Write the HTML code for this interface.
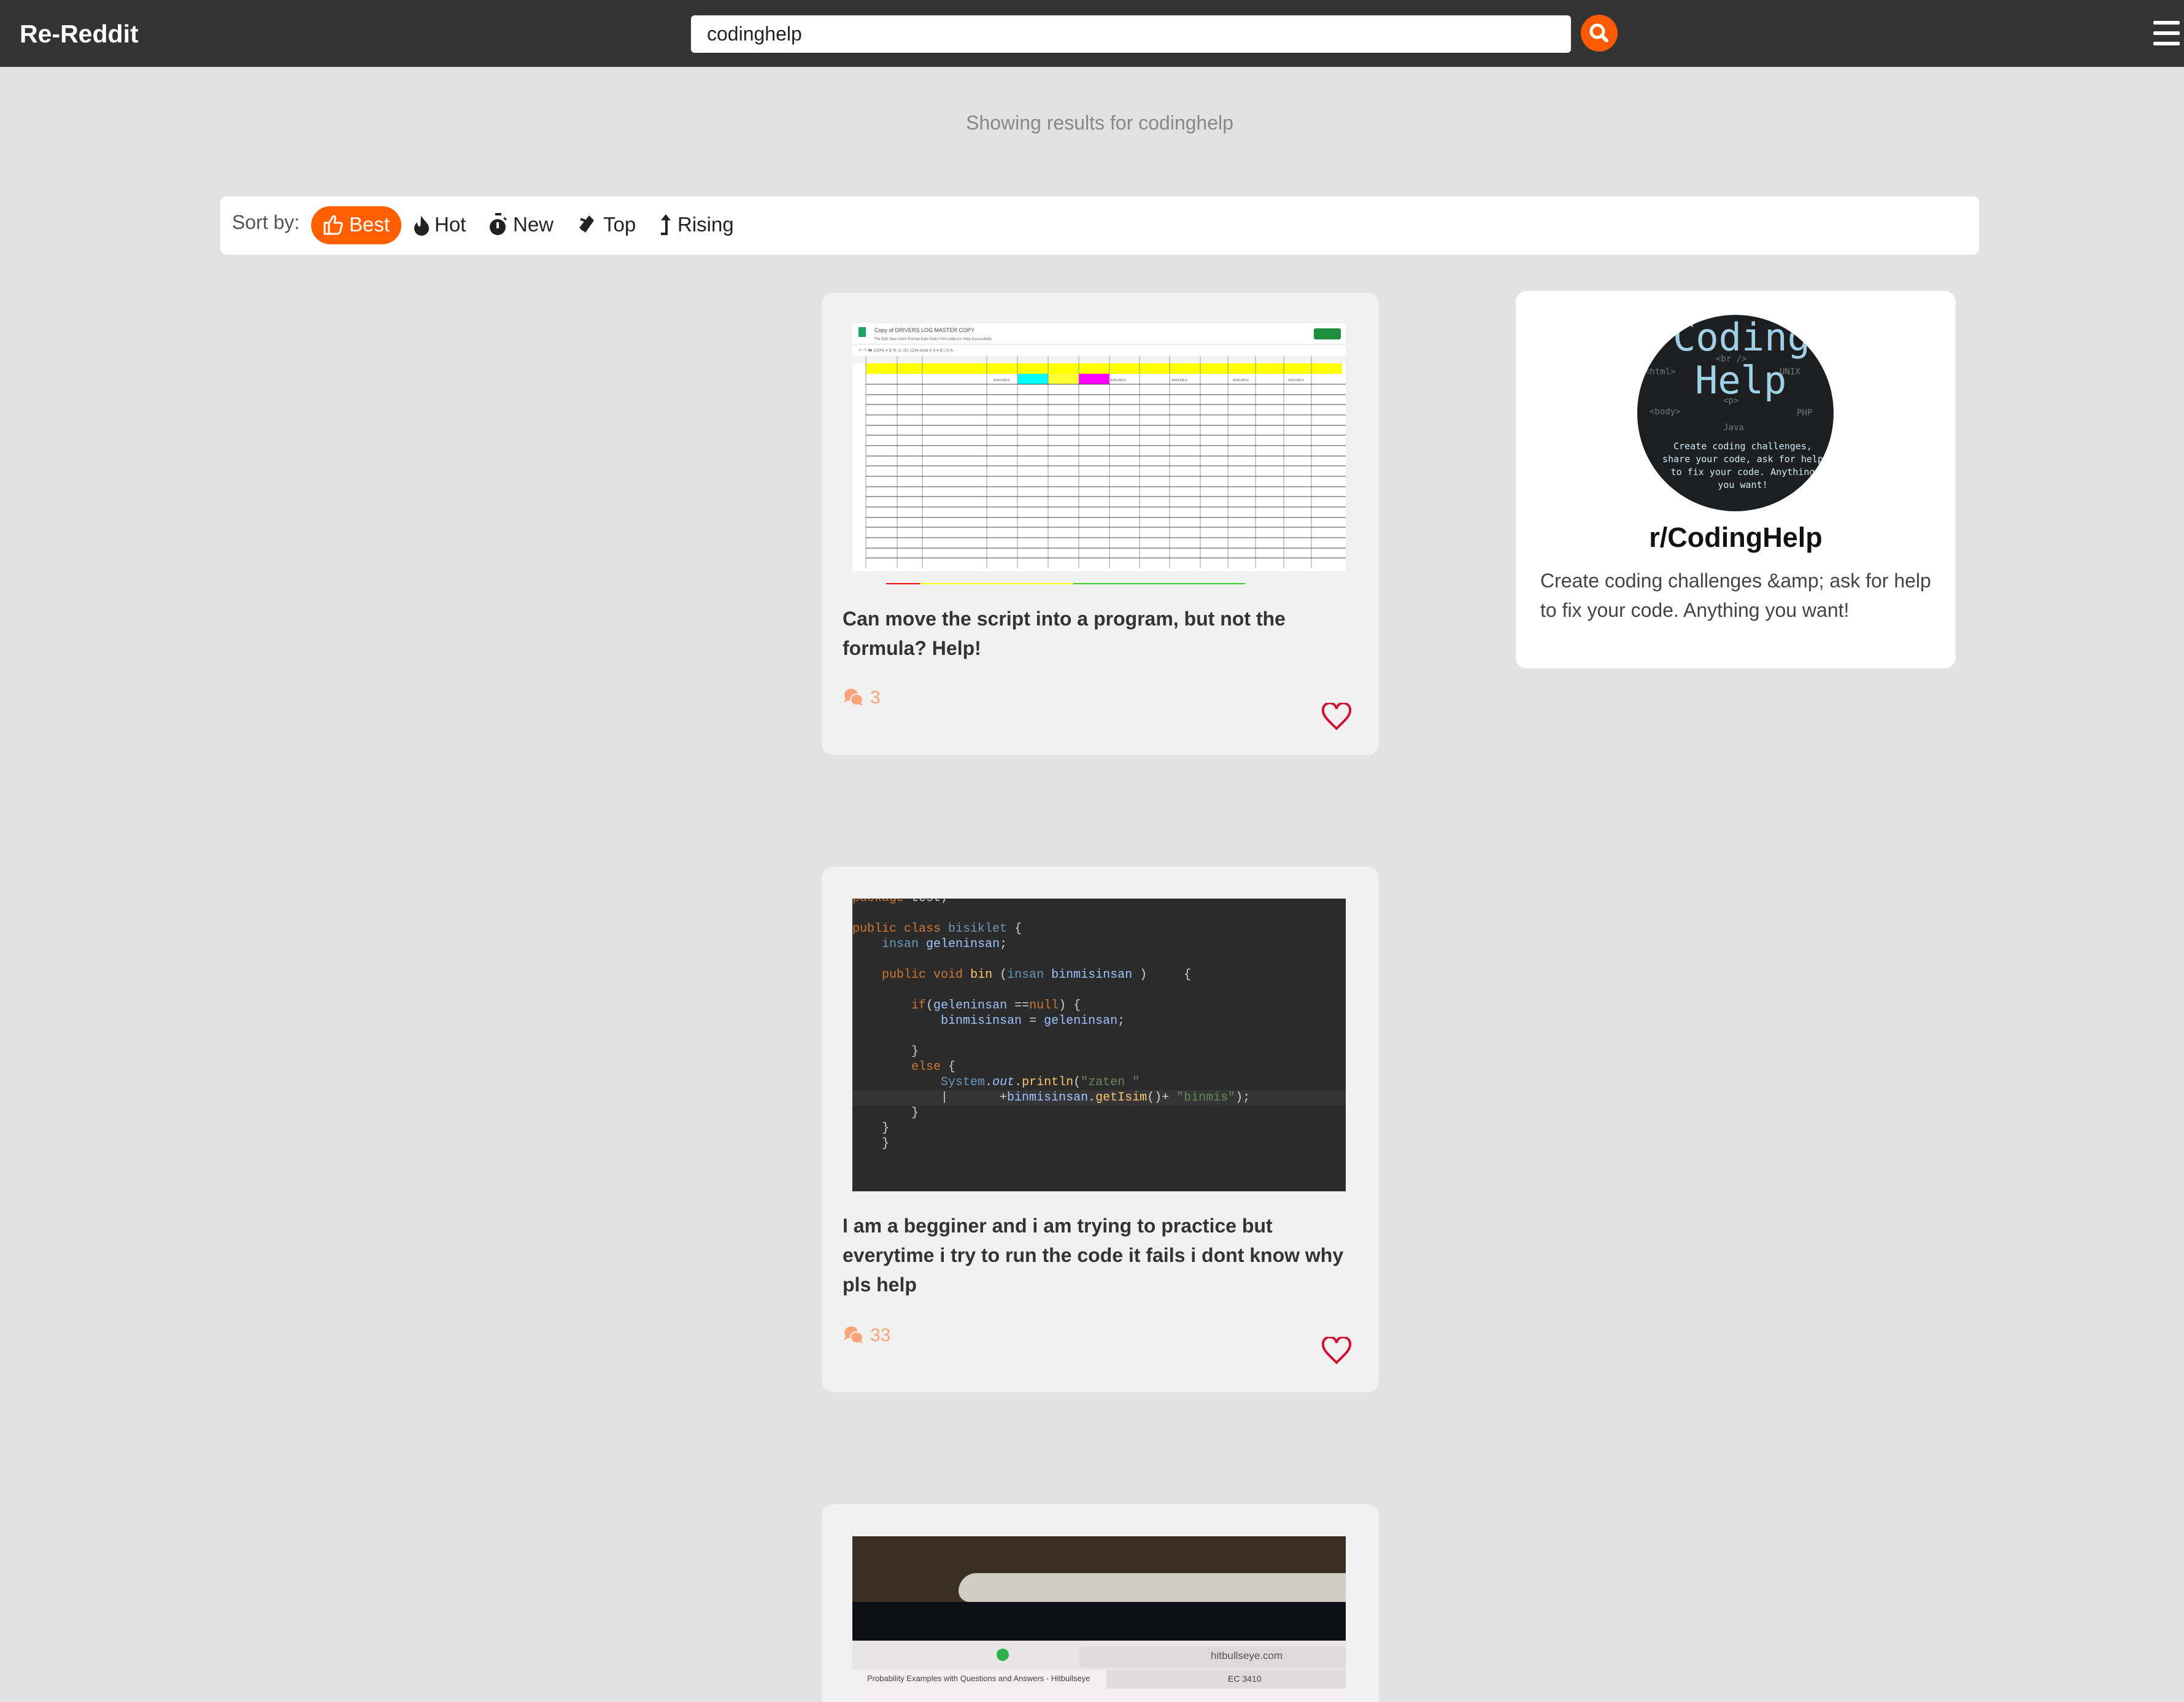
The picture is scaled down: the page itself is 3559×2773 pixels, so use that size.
<!DOCTYPE html>
<html style="overflow:hidden;height:2773px"><head><meta charset="utf-8"><style>
*{margin:0;padding:0;box-sizing:border-box}
body{width:3559px;height:2773px;overflow:hidden;background:#e2e2e2;font-family:"Liberation Sans",Arial,sans-serif;position:relative}
.abs{position:absolute}
.hdr{left:0;top:0;width:3559px;height:109px;background:#333}
.logo{left:32px;top:32px;color:#fff;font-weight:bold;font-size:41px}
.search{left:1126px;top:25px;width:1434px;height:61px;background:#fff;border-radius:6px;font-size:32px;color:#222;padding:12px 26px}
.sbtn{left:2576px;top:24px;width:60px;height:60px;border-radius:50%;background:#ff5a00}
.ham{left:3509px;width:43px;height:6px;background:#fff;border-radius:2px}
.showing{left:0;width:3584px;top:182px;text-align:center;font-size:32px;color:#888}
.sort{left:359px;top:320px;width:2866px;height:95px;background:#fff;border-radius:10px}
.sortlbl{left:378px;top:344px;font-size:32px;color:#555}
.best{left:507px;top:336px;width:147px;height:62px;background:#ff5f00;border-radius:31px}
.opt{top:347px;font-size:33px;color:#222}
.card{background:#f1f1f1;border-radius:18px}
.title{font-size:32px;font-weight:bold;color:#333;line-height:48px}
.cmt{font-size:30px;color:#f9a479}
pre{font-family:"Liberation Mono",monospace;font-size:20px;line-height:25px;color:#cfcfcf}
</style></head><body>
<div class="abs hdr"></div>
<div class="abs logo">Re-Reddit</div>
<div class="abs search">codinghelp</div>
<div class="abs sbtn"><svg width="60" height="60" viewBox="0 0 60 60"><circle cx="27" cy="27" r="10" fill="none" stroke="#fff" stroke-width="5"/><line x1="34" y1="34" x2="42" y2="42" stroke="#fff" stroke-width="6" stroke-linecap="round"/></svg></div>
<div class="abs ham" style="top:34px"></div><div class="abs ham" style="top:51px"></div><div class="abs ham" style="top:68px"></div>
<div class="abs showing">Showing results for codinghelp</div>
<div class="abs sort"></div>
<div class="abs sortlbl">Sort by:</div>
<div class="abs best"></div>
<svg class="abs" style="left:525px;top:348px" width="36" height="36" viewBox="0 0 36 36"><path d="M4 15h7v18H4z M11 16l7-12c3 0 4 2 3 6l-1 5h10c2 0 3 2 2 4l-3 11c-1 2-2 3-4 3H11" fill="none" stroke="#fff" stroke-width="3" stroke-linejoin="round"/></svg>
<div class="abs opt" style="left:569px;color:#fff">Best</div>
<svg class="abs" style="left:674px;top:350px" width="26" height="34" viewBox="0 0 26 34"><path d="M13 1c2 8 12 12 12 21a12 12 0 0 1-24 0c0-5 3-8 5-10 0 5 2 7 4 7 3 0 0-9 3-18z" fill="#222"/></svg>
<div class="abs opt" style="left:708px">Hot</div>
<svg class="abs" style="left:797px;top:347px" width="30" height="38" viewBox="0 0 30 38"><rect x="10" y="0" width="10" height="4" fill="#222"/><circle cx="14" cy="23" r="13" fill="#222"/><rect x="12" y="15" width="4" height="10" fill="#fff"/><path d="M24 8l4 3" stroke="#222" stroke-width="3"/></svg>
<div class="abs opt" style="left:836px">New</div>
<svg class="abs" style="left:940px;top:349px" width="34" height="34" viewBox="0 0 34 34"><path d="M20 2l8 8-14 20-10-8z" fill="#222"/><path d="M6 8l6 2 4 6-8 10" fill="none" stroke="#222" stroke-width="4"/></svg>
<div class="abs opt" style="left:983px">Top</div>
<svg class="abs" style="left:1073px;top:348px" width="24" height="36" viewBox="0 0 24 36"><path d="M12 1l8 10h-5v24H4v-4h7V11H4z" fill="#222"/></svg>
<div class="abs opt" style="left:1104px">Rising</div>

<!-- card 1 -->
<div class="abs card" style="left:1339px;top:477px;width:908px;height:753px"></div>
<svg class="abs" style="left:1389px;top:527px" width="804" height="426" viewBox="0 0 804 426">
<rect width="804" height="426" fill="#fff"/>
<rect x="10" y="6" width="12" height="16" fill="#1fa463"/>
<text x="36" y="14" font-size="9" fill="#444" font-family="Liberation Sans">Copy of DRIVERS LOG MASTER COPY</text>
<text x="36" y="27" font-size="6" fill="#666" font-family="Liberation Sans">File  Edit  View  Insert  Format  Data  Tools  Form  Add-ons  Help  Accessibility</text>
<rect x="752" y="8" width="44" height="18" fill="#1e8e3e" rx="3"/>
<line x1="0" y1="34" x2="804" y2="34" stroke="#ddd"/>
<text x="10" y="46" font-size="7" fill="#777" font-family="Liberation Sans">↶ ↷ 🖶  100% ▾  $ % .0 .00 123▾  Arial ▾  9 ▾  B I S A</text>
<rect x="0" y="53" width="804" height="12" fill="#f3f3f3"/>
<rect x="22" y="65" width="776" height="17" fill="#ffff00"/>
<rect x="269" y="82" width="50" height="17" fill="#00ffff"/>
<rect x="319" y="82" width="50" height="17" fill="#ffff33"/>
<rect x="369" y="82" width="50" height="17" fill="#ff00ff"/>
<g stroke="#999" stroke-width="1">
<line x1="22" y1="53" x2="22" y2="398"/><line x1="73" y1="53" x2="73" y2="398"/><line x1="114" y1="53" x2="114" y2="398"/><line x1="219" y1="53" x2="219" y2="398"/><line x1="269" y1="53" x2="269" y2="398"/><line x1="319" y1="53" x2="319" y2="398"/><line x1="369" y1="53" x2="369" y2="398"/><line x1="419" y1="53" x2="419" y2="398"/><line x1="468" y1="53" x2="468" y2="398"/><line x1="517" y1="53" x2="517" y2="398"/><line x1="567" y1="53" x2="567" y2="398"/><line x1="612" y1="53" x2="612" y2="398"/><line x1="657" y1="53" x2="657" y2="398"/><line x1="703" y1="53" x2="703" y2="398"/><line x1="748" y1="53" x2="748" y2="398"/>
</g>
<g stroke="#444" stroke-width="1">
<line x1="22" y1="99" x2="804" y2="99"/><line x1="22" y1="116" x2="804" y2="116"/><line x1="22" y1="132" x2="804" y2="132"/><line x1="22" y1="149" x2="804" y2="149"/><line x1="22" y1="166" x2="804" y2="166"/><line x1="22" y1="182" x2="804" y2="182"/><line x1="22" y1="199" x2="804" y2="199"/><line x1="22" y1="216" x2="804" y2="216"/><line x1="22" y1="232" x2="804" y2="232"/><line x1="22" y1="249" x2="804" y2="249"/><line x1="22" y1="266" x2="804" y2="266"/><line x1="22" y1="282" x2="804" y2="282"/><line x1="22" y1="299" x2="804" y2="299"/><line x1="22" y1="316" x2="804" y2="316"/><line x1="22" y1="332" x2="804" y2="332"/><line x1="22" y1="349" x2="804" y2="349"/><line x1="22" y1="366" x2="804" y2="366"/><line x1="22" y1="382" x2="804" y2="382"/>
</g>
<g fill="#666" font-size="5" font-family="Liberation Sans">
<text x="230" y="94">AVAILABLE</text><text x="420" y="94">AVAILABLE</text><text x="520" y="94">AVAILABLE</text><text x="620" y="94">AVAILABLE</text><text x="710" y="94">AVAILABLE</text>
</g>
<rect x="0" y="404" width="804" height="22" fill="#f1f1f1"/>
<rect x="55" y="423" width="55" height="2" fill="#f00"/><rect x="110" y="423" width="250" height="2" fill="#ff0"/><rect x="360" y="423" width="280" height="2" fill="#3c3"/>
</svg>
<div class="abs title" style="left:1373px;top:984px;width:820px">Can move the script into a program, but not the formula? Help!</div>
<svg class="abs" style="left:1373px;top:1121px" width="36" height="30" viewBox="0 0 36 30"><ellipse cx="14" cy="11" rx="11" ry="10" fill="#f9a479"/><path d="M5 17l-3 7 7-4z" fill="#f9a479"/><ellipse cx="23" cy="19" rx="10" ry="9" fill="#f9a479" stroke="#f1f1f1" stroke-width="2"/><path d="M30 24l3 5-7-3z" fill="#f9a479"/></svg>
<div class="abs cmt" style="left:1418px;top:1120px">3</div>
<svg class="abs" style="left:2152px;top:1145px" width="52" height="46" viewBox="0 0 52 46"><path d="M26 42C14 30 4 22 4 13a10 10 0 0 1 22-3 10 10 0 0 1 22 3c0 9-10 17-22 29z" fill="none" stroke="#d21034" stroke-width="4"/></svg>

<!-- sidebar -->
<div class="abs" style="left:2470px;top:474px;width:717px;height:615px;background:#fff;border-radius:18px"></div>
<div class="abs" style="left:2668px;top:513px;width:320px;height:320px;border-radius:50%;background:#1c1e20;overflow:hidden;font-family:'DejaVu Sans Mono',monospace">
<div class="abs" style="left:58px;top:0px;font-size:62px;color:#9fd0e6">Coding</div>
<div class="abs" style="left:94px;top:70px;font-size:62px;color:#9fd0e6">Help</div>
<div class="abs" style="left:128px;top:64px;font-size:14px;color:#777">&lt;br /&gt;</div>
<div class="abs" style="left:12px;top:85px;font-size:14px;color:#777">&lt;html&gt;</div>
<div class="abs" style="left:232px;top:85px;font-size:14px;color:#777">UNIX</div>
<div class="abs" style="left:140px;top:132px;font-size:14px;color:#777">&lt;p&gt;</div>
<div class="abs" style="left:20px;top:150px;font-size:14px;color:#777">&lt;body&gt;</div>
<div class="abs" style="left:260px;top:152px;font-size:14px;color:#777">PHP</div>
<div class="abs" style="left:140px;top:176px;font-size:14px;color:#777">Java</div>
<div class="abs" style="left:22px;top:204px;width:300px;text-align:center;font-size:15px;line-height:21px;color:#cfeef9;white-space:nowrap">Create coding challenges,<br>share your code, ask for help<br>to fix your code. Anything<br>you want!</div>
</div>
<div class="abs" style="left:2470px;top:850px;width:717px;text-align:center;font-size:45px;font-weight:bold;color:#111">r/CodingHelp</div>
<div class="abs" style="left:2510px;top:922px;width:650px;font-size:32px;line-height:48px;color:#444">Create coding challenges &amp;amp; ask for help to fix your code. Anything you want!</div>

<!-- card 2 -->
<div class="abs card" style="left:1339px;top:1412px;width:908px;height:856px"></div>
<div class="abs" style="left:1389px;top:1464px;width:804px;height:477px;background:#2b2b2b;overflow:hidden">
<div class="abs" style="left:0;top:312px;width:804px;height:25px;background:#353535"></div>
<pre class="abs" style="left:0;top:-13px">
<span style="color:#cc7832">package</span> test;

<span style="color:#cc7832">public class</span> <span style="color:#6897bb">bisiklet</span> {
    <span style="color:#6897bb">insan</span> <span style="color:#9ec5ff">geleninsan</span>;

    <span style="color:#cc7832">public void</span> <span style="color:#ffc66d">bin</span> (<span style="color:#6897bb">insan</span> <span style="color:#9ec5ff">binmisinsan</span> )     {

        <span style="color:#cc7832">if</span>(<span style="color:#9ec5ff">geleninsan</span> ==<span style="color:#cc7832">null</span>) {
            <span style="color:#9ec5ff">binmisinsan</span> = <span style="color:#9ec5ff">geleninsan</span>;

        }
        <span style="color:#cc7832">else</span> {
            <span style="color:#6897bb">System</span>.<i style="color:#9ec5ff">out</i>.<span style="color:#ffc66d">println</span>(<span style="color:#6a8759">"zaten "</span>
            |       +<span style="color:#9ec5ff">binmisinsan</span>.<span style="color:#ffc66d">getIsim</span>()+ <span style="color:#6a8759">"binmis"</span>);
        }
    }
    }
</pre>
</div>
<div class="abs title" style="left:1373px;top:1973px;width:840px">I am a begginer and i am trying to practice but everytime i try to run the code it fails i dont know why pls help</div>
<svg class="abs" style="left:1373px;top:2160px" width="36" height="30" viewBox="0 0 36 30"><ellipse cx="14" cy="11" rx="11" ry="10" fill="#f9a479"/><path d="M5 17l-3 7 7-4z" fill="#f9a479"/><ellipse cx="23" cy="19" rx="10" ry="9" fill="#f9a479" stroke="#f1f1f1" stroke-width="2"/><path d="M30 24l3 5-7-3z" fill="#f9a479"/></svg>
<div class="abs cmt" style="left:1418px;top:2159px">33</div>
<svg class="abs" style="left:2152px;top:2178px" width="52" height="46" viewBox="0 0 52 46"><path d="M26 42C14 30 4 22 4 13a10 10 0 0 1 22-3 10 10 0 0 1 22 3c0 9-10 17-22 29z" fill="none" stroke="#d21034" stroke-width="4"/></svg>

<!-- card 3 -->
<div class="abs card" style="left:1339px;top:2451px;width:908px;height:322px;border-radius:18px 18px 0 0"></div>
<div class="abs" style="left:1389px;top:2503px;width:804px;height:270px;overflow:hidden;background:#e9e4e6">
<div class="abs" style="left:0;top:0;width:804px;height:107px;background:#3a2e22"></div>
<div class="abs" style="left:173px;top:60px;width:640px;height:47px;background:#d0ccc4;border-radius:40px 0 0 24px"></div>
<div class="abs" style="left:0;top:107px;width:804px;height:63px;background:#0d0f14"></div>
<div class="abs" style="left:370px;top:180px;width:460px;height:34px;background:#dcdadb;border-radius:8px"></div>
<div class="abs" style="left:254px;top:185px;font-size:17px;color:#555;margin-left:330px">hitbullseye.com</div>
<div class="abs" style="left:235px;top:183px;width:20px;height:20px;border-radius:50%;background:#2fb050"></div>
<div class="abs" style="left:0;top:218px;width:804px;height:52px;background:#f2eff0"></div>
<div class="abs" style="left:414px;top:218px;width:390px;height:30px;background:#e0dcdd"></div>
<div class="abs" style="left:24px;top:224px;font-size:13px;color:#444">Probability Examples with Questions and Answers - Hitbullseye</div>
<div class="abs" style="left:612px;top:224px;font-size:14px;color:#444">EC 3410</div>
</div>
</body></html>
